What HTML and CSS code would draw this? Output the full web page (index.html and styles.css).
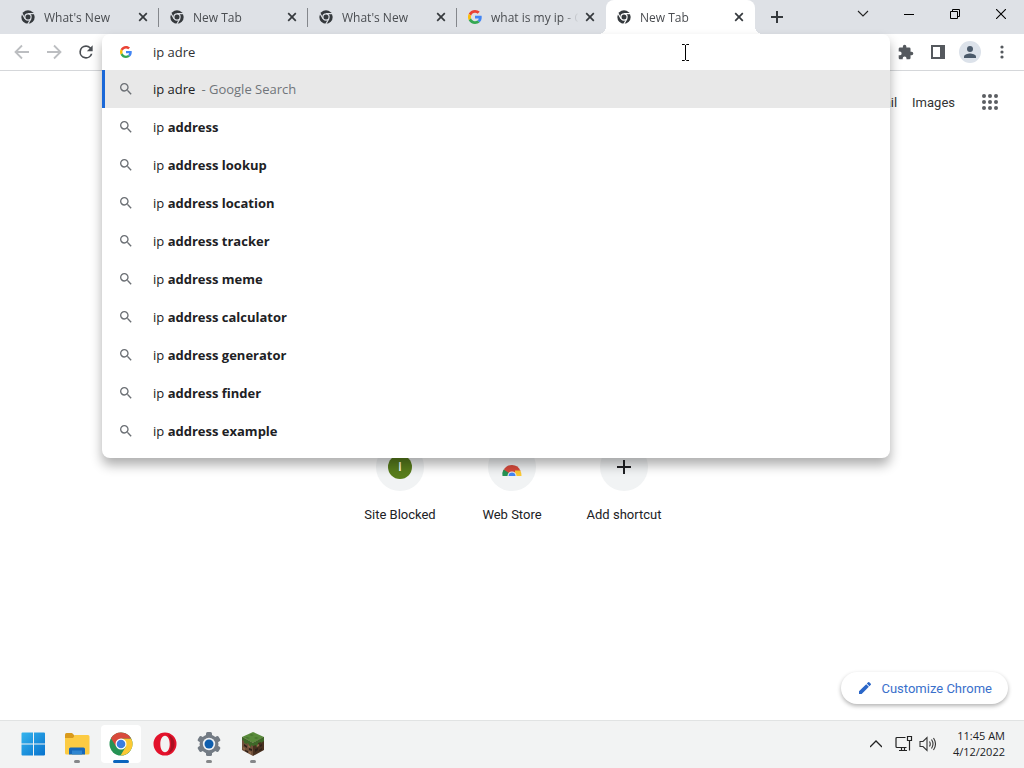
FILE: index.html
```html
<!DOCTYPE html>
<html lang="en">
<head>
<meta charset="utf-8">
<title>New Tab</title>
<link rel="stylesheet" href="styles.css">
</head>
<body>
<svg class="defs" aria-hidden="true">
  <symbol id="chrome-mono" viewBox="0 0 24 24">
    <circle cx="12" cy="12" r="11.5" fill="#35393d"/>
    <circle cx="12" cy="12" r="6.3" fill="var(--gap)"/>
    <path d="M12 6.3h11.5M7 15 1.3 5.2M17 15l-5.6 9.7" stroke="var(--gap)" stroke-width="2" fill="none"/>
    <circle cx="12" cy="12" r="4.300" fill="#35393d"/>
  </symbol>
  <symbol id="google" viewBox="0 0 48 48">
    <path fill="#ea4335" d="M24 9.5c3.5 0 6.700 1.200 9.200 3.600l6.900-6.900C35.900 2.400 30.500 0 24 0 14.600 0 6.500 5.400 2.600 13.200l8 6.200C12.400 13.700 17.700 9.500 24 9.500z"/>
    <path fill="#4285f4" d="M47 24.600c0-1.600-.2-3.100-.4-4.600H24v9h12.900c-.6 3-2.200 5.500-4.700 7.200l7.700 6C44.400 38 47 31.800 47 24.600z"/>
    <path fill="#fbbc05" d="M10.500 28.600c-.5-1.500-.8-3-.8-4.600s.3-3.100.8-4.600l-8-6.200C1 16.500 0 20.100 0 24s.9 7.500 2.600 10.800z"/>
    <path fill="#34a853" d="M24 48c6.500 0 11.900-2.100 15.900-5.800l-7.700-6C30 37.600 27.200 38.500 24 38.500c-6.300 0-11.600-4.200-13.500-9.900l-8 6.200C6.500 42.600 14.600 48 24 48z"/>
  </symbol>
  <symbol id="close" viewBox="0 0 10 10"><path d="M1.200 1.200 8.800 8.800M8.800 1.200 1.200 8.800" stroke="#35393d" stroke-width="1.700"/></symbol>
  <symbol id="search" viewBox="0 0 24 24"><path fill="#6b6f74" d="M15.500 14h-.79l-.28-.27A6.470 6.470 0 0 0 16 9.500 6.500 6.500 0 1 0 9.500 16c1.610 0 3.090-.59 4.230-1.570l.27.28v.79l5 4.990L20.490 19l-4.990-5zm-6 0C7.010 14 5 11.990 5 9.500S7.010 5 9.500 5 14 7.010 14 9.500 11.990 14 9.500 14z"/></symbol>
</svg>

<header class="tabstrip">
  <div class="tab"><svg class="favicon"><use href="#chrome-mono"/></svg><span class="tab-title">What's New</span><button class="tab-close" aria-label="Close What's New"><svg><use href="#close"/></svg></button></div>
  <div class="tab"><svg class="favicon"><use href="#chrome-mono"/></svg><span class="tab-title">New Tab</span><button class="tab-close" aria-label="Close New Tab"><svg><use href="#close"/></svg></button></div>
  <div class="tab"><svg class="favicon"><use href="#chrome-mono"/></svg><span class="tab-title">What's New</span><button class="tab-close" aria-label="Close What's New"><svg><use href="#close"/></svg></button></div>
  <div class="tab tab-last"><svg class="favicon"><use href="#google"/></svg><span class="tab-title">what is my ip - G</span><button class="tab-close" aria-label="Close what is my ip"><svg><use href="#close"/></svg></button></div>
  <div class="tab tab-active"><svg class="favicon"><use href="#chrome-mono"/></svg><span class="tab-title">New Tab</span><button class="tab-close" aria-label="Close New Tab"><svg><use href="#close"/></svg></button></div>
  <button class="new-tab" aria-label="New tab"><svg width="12" height="12" viewBox="0 0 12 12"><path d="M6 0v12M0 6h12" stroke="#35393d" stroke-width="2"/></svg></button>
  <div class="window-controls">
    <button aria-label="Search tabs"><svg width="12" height="12" viewBox="0 0 12 12"><path d="m1 3 5 5 5-5" fill="none" stroke="#222" stroke-width="1.100"/></svg></button>
    <button aria-label="Minimize"><svg width="10" height="10" viewBox="0 0 10 10"><path d="M0 5.500h10" stroke="#000"/></svg></button>
    <button aria-label="Restore"><svg width="10" height="10" viewBox="0 0 10 10"><path d="M.5 2.500h7v7h-7zM2.500 2.500v-2h7v7h-2" fill="none" stroke="#000"/></svg></button>
    <button aria-label="Close window"><svg width="10" height="10" viewBox="0 0 10 10"><path d="m0 0 10 10M10 0 0 10" stroke="#000" stroke-width="1.100"/></svg></button>
  </div>
</header>

<div class="toolbar">
  <div class="tools">
    <button aria-label="Back"><svg width="16" height="16" viewBox="0 0 16 16"><path d="M15 8H2M8 1.500 1.500 8 8 14.500" fill="none" stroke="#bcbec1" stroke-width="1.800"/></svg></button>
    <button aria-label="Forward"><svg width="16" height="16" viewBox="0 0 16 16"><path d="M1 8h13M8 1.500 14.500 8 8 14.500" fill="none" stroke="#bcbec1" stroke-width="1.800"/></svg></button>
    <button aria-label="Reload"><svg width="20" height="20" viewBox="0 0 24 24"><path fill="#4b4f54" d="M17.650 6.350A7.960 7.960 0 0 0 12 4a8 8 0 1 0 7.730 10h-2.080A6 6 0 1 1 12 6c1.660 0 3.140.69 4.220 1.780L13 11h7V4z"/></svg></button>
  </div>
  <div class="omnibox">
    <div class="popup">
      <div class="address">
        <svg class="google-icon"><use href="#google"/></svg>
        <input type="text" value="ip adre" aria-label="Search Google or type a URL" spellcheck="false">
        <svg class="cursor" width="9" height="17" viewBox="0 0 9 17"><path d="M1 .5h2.500l1 1 1-1H8M4.500 1v15M1 16.500h2.500l1-1 1 1H8" fill="none" stroke="#000"/></svg>
      </div>
      <div class="suggestions">
        <button class="selected"><svg><use href="#search"/></svg><span>ip adre<i>- Google Search</i></span></button>
        <button><svg><use href="#search"/></svg><span>ip <b>address</b></span></button>
        <button><svg><use href="#search"/></svg><span>ip <b>address lookup</b></span></button>
        <button><svg><use href="#search"/></svg><span>ip <b>address location</b></span></button>
        <button><svg><use href="#search"/></svg><span>ip <b>address tracker</b></span></button>
        <button><svg><use href="#search"/></svg><span>ip <b>address meme</b></span></button>
        <button><svg><use href="#search"/></svg><span>ip <b>address calculator</b></span></button>
        <button><svg><use href="#search"/></svg><span>ip <b>address generator</b></span></button>
        <button><svg><use href="#search"/></svg><span>ip <b>address finder</b></span></button>
        <button><svg><use href="#search"/></svg><span>ip <b>address example</b></span></button>
      </div>
    </div>
  </div>
  <div class="tools">
    <button aria-label="Extensions"><svg width="16" height="16" viewBox="1 0 23 23"><path fill="#55595e" d="M20.500 11H19V7a2 2 0 0 0-2-2h-4V3.500a2.500 2.500 0 0 0-5 0V5H4a2 2 0 0 0-2 2v3.800h1.500a2.700 2.700 0 0 1 0 5.400H2V20c0 1.100.9 2 2 2h3.800v-1.500a2.700 2.700 0 0 1 5.400 0V22H17a2 2 0 0 0 2-2v-4h1.500a2.500 2.500 0 0 0 0-5z"/></svg></button>
    <button aria-label="Side panel"><svg width="14" height="14" viewBox="0 0 14 14"><path d="M1 1h12v12H1z" fill="none" stroke="#55595e" stroke-width="2"/><path fill="#55595e" d="M9 1h5v12H9z"/></svg></button>
    <button aria-label="Profile"><svg width="22" height="22" viewBox="0 0 22 22"><circle cx="11" cy="11" r="11" fill="#dce2ea"/><circle cx="11" cy="8" r="3" fill="#4b5a6b"/><path fill="#4b5a6b" d="M5 17v-1.500c0-2 4-3 6-3s6 1 6 3V17z"/></svg></button>
    <button aria-label="Menu"><svg width="4" height="14" viewBox="0 0 4 14"><g fill="#55595e"><circle cx="2" cy="2" r="1.600"/><circle cx="2" cy="7" r="1.600"/><circle cx="2" cy="12" r="1.600"/></g></svg></button>
  </div>
</div>

<main class="page">
  <nav class="links">
    <a href="#">Gmail</a>
    <a href="#">Images</a>
    <button aria-label="Google apps"><svg width="16" height="16" viewBox="0 0 16 16"><g fill="#5b5e62"><circle cx="2" cy="2" r="2"/><circle cx="8" cy="2" r="2"/><circle cx="14" cy="2" r="2"/><circle cx="2" cy="8" r="2"/><circle cx="8" cy="8" r="2"/><circle cx="14" cy="8" r="2"/><circle cx="2" cy="14" r="2"/><circle cx="8" cy="14" r="2"/><circle cx="14" cy="14" r="2"/></g></svg></button>
  </nav>
  <div class="shortcuts">
    <a href="#"><span class="bubble"><span class="letter">I</span></span>Site Blocked</a>
    <a href="#"><span class="bubble"><svg width="24" height="24" viewBox="0 -3 24 24"><path fill="#d84a3c" d="M3.500 13a9 9 0 0 1 17 0l-4.500 3H8z"/><path fill="#269354" d="M3.500 11.500A10 10 0 0 0 2.500 18H8l1-3z"/><path fill="#fcc934" d="M15 12.500h5.300a10 10 0 0 1 1.200 5.500H15z"/><path fill="#f3f5f5" d="M7.500 18a4.500 4.500 0 0 1 9 0z"/><path fill="#4285f4" d="M8.500 18a3.500 3.500 0 0 1 7 0z"/></svg></span>Web Store</a>
    <a href="#"><span class="bubble"><svg width="14" height="14" viewBox="0 0 14 14"><path d="M7 0v14M0 7h14" stroke="#202124" stroke-width="2"/></svg></span>Add shortcut</a>
  </div>
  <button class="customize"><svg width="16" height="16" viewBox="0 0 24 24"><path fill="#2a66c8" d="M3 17v4h4L17.800 10.200l-4-4zM20.700 7.300a1.200 1.200 0 0 0 0-1.700l-2.300-2.300a1.200 1.200 0 0 0-1.700 0l-2 2 4 4z"/></svg>Customize Chrome</button>
</main>

<footer class="taskbar">
  <div class="apps">
    <button aria-label="Start"><svg width="24" height="24" viewBox="0 0 24 24"><defs><linearGradient id="win" x2="1" y2="1"><stop stop-color="#35b5ee"/><stop offset="1" stop-color="#0872cd"/></linearGradient></defs><path fill="url(#win)" d="M1.500.5h10.500v11H.5v-10a1 1 0 0 1 1-1zM13 .5h10a1 1 0 0 1 1 1v10H13zM.5 12.500H12v11H1.500a1 1 0 0 1-1-1zM13 12.500h11v10a1 1 0 0 1-1 1H13z"/></svg></button>
    <button class="running" aria-label="File Explorer"><svg width="26" height="24" viewBox="0 0 26 24"><path fill="#d99a1c" d="M1 2.500q0-1.500 1.500-1.500H8l3 3v4H1z"/><path fill="#fccb43" d="M1 6h8l2-3h13q1.500 0 1.500 1.500V21q0 1.500-1.500 1.500H2.500Q1 22.500 1 21z"/><path fill="#1768b9" d="M6.500 15.500h13q1.500 0 1.500 1.500v5.500H5V17q0-1.500 1.500-1.500z"/><path fill="#2f86d0" d="M8 18.500h10v4H8z"/></svg></button>
    <button class="running current" aria-label="Google Chrome"><svg width="24" height="24" viewBox="0 0 24 24"><circle cx="12" cy="12" r="11.500" fill="#269354"/><path fill="#fcc934" d="M12 6.500h10.100A11.500 11.500 0 0 1 11.500 23.500L16.800 14.800z"/><path fill="#d84a3c" d="M2 6.300a11.500 11.500 0 0 1 20 .2H12l-4.800 8.300z"/><circle cx="12" cy="12" r="5.500" fill="#fff"/><circle cx="12" cy="12" r="4.300" fill="#3b7de0"/></svg></button>
    <button aria-label="Opera"><svg width="24" height="24" viewBox="0 0 24 24"><path fill="#e3122b" fill-rule="evenodd" d="M12 .5a11.500 11.500 0 1 0 0 23 11.500 11.500 0 0 0 0-23zm0 3.300c3 0 4.700 3.700 4.700 8.200S15 20.200 12 20.200 7.300 16.500 7.300 12 9 3.800 12 3.800z"/><path fill="#ab1020" d="M15 2.500c4 1.500 6.500 5 6.500 9.500s-2.500 8-6.500 9.500c2-2.300 3-5.500 3-9.500s-1-7.200-3-9.500z"/></svg></button>
    <button class="running" aria-label="Settings"><svg width="24" height="24" viewBox="0 0 24 24"><g fill="#737b84"><circle cx="12" cy="12" r="9.500"/><rect x="9" width="6" height="24" rx="1.500"/><rect x="9" width="6" height="24" rx="1.500" transform="rotate(60 12 12)"/><rect x="9" width="6" height="24" rx="1.500" transform="rotate(120 12 12)"/></g><circle cx="12" cy="12" r="6.200" fill="#eef1f4"/><circle cx="12" cy="12" r="4.500" fill="#0e5eae"/></svg></button>
    <button class="running" aria-label="Minecraft"><svg width="24" height="26" viewBox="0 0 24 26"><path fill="#598b3b" d="m12 1 11 5-11 6L1 6z"/><path fill="#70503a" d="m1 6 11 6v13L1 19z"/><path fill="#48301f" d="m23 6-11 6v13l11-6z"/><path fill="#3e6828" d="m1 6 11 6v3l-2-1v2l-2-1v-2l-2-1v1l-3-1V10l-2-1zM23 6l-11 6v3l3-1v2l2-1v-3l3-1v1l3-2z"/><path fill="#2e2018" d="m3 13 3 2v2l-3-2zm5 4 3 1v2l-3-1zm-4 2 3 1v2l-3-2zm10-1 3-1v2l-3 2zm5-4 2-1v2l-2 1zm-1 5 3-2v2l-3 1z"/><path fill="#91674a" d="m2 16 2 1v2l-2-1zm5-2 2 1v2l-2-1zm1 6 2 1v2l-2-1zm8-6 2-1v2l-2 1z"/><path fill="#4a7730" d="m10 3 3 1-2 1-3-1zm5 3 3 1-3 1-2-1zM6 6l3 1-2 1-3-2z"/></svg></button>
  </div>
  <div class="tray">
    <button aria-label="Show hidden icons"><svg width="12" height="12" viewBox="0 0 12 12"><path d="m0 9 6-6 6 6" fill="none" stroke="#222" stroke-width="1.300"/></svg></button>
    <button aria-label="Network"><svg width="18" height="18" viewBox="0 0 18 18"><path d="M10.500 2.500H2q-1 0-1 1v8q0 1 1 1h9.500M4 15.500h8M6.500 12.500v3M9.500 12.500v3M12.500 1.500h4v4h-4zM14.500 5.500v10" fill="none" stroke="#222" stroke-width="1.200"/></svg></button>
    <button aria-label="Volume"><svg width="18" height="18" viewBox="0 0 18 18"><path d="M1 6.500h3l4-4v13l-4-4H1zM10.500 6.500q1.500 2.500 0 5M12.500 4.500q3 4.500 0 9M14.500 3q4 6 0 12" fill="none" stroke="#333" stroke-width="1.100"/></svg></button>
    <time class="clock" datetime="2022-04-12T11:45"><span>11:45 AM</span><span>4/12/2022</span></time>
  </div>
</footer>
</body>
</html>
```
FILE: styles.css
```css
* { box-sizing: border-box; }

body {
  margin: 0;
  min-height: 100vh;
  display: flex;
  flex-direction: column;
  background: #fff;
  color: #202124;
  font-family: "Open Sans", "Noto Sans", sans-serif;
  font-size: 13px;
}

button {
  display: flex;
  align-items: center;
  justify-content: center;
  padding: 0;
  border: 0;
  background: none;
  color: inherit;
  font: inherit;
}

a { color: inherit; text-decoration: none; }
svg { flex: none; }
.defs { display: none; }

.tabstrip {
  --gap: #dee1e6;
  display: flex;
  height: 34px;
  padding-left: 10px;
  background: #dee1e6;
}

.tab {
  position: relative;
  display: flex;
  align-items: center;
  flex: 0 1 149px;
  min-width: 0;
  padding: 0 10px 0 11px;
  color: #4a4d51;
  font-size: 12px;
}

.tab:not(.tab-last, .tab-active)::after {
  content: "";
  position: absolute;
  right: 0;
  top: 8px;
  height: 19px;
  border-right: 1px solid #84878c;
}

.tab-active {
  --gap: #fff;
  background: #fff;
  border-radius: 8px 8px 0 0;
}

.tab-active::before,
.tab-active::after {
  content: "";
  position: absolute;
  bottom: 0;
  width: 8px;
  height: 8px;
}

.tab-active::before {
  right: 100%;
  background: radial-gradient(circle at 0 0, #dee1e6 8px, #fff 8px);
}

.tab-active::after {
  left: 100%;
  background: radial-gradient(circle at 100% 0, #dee1e6 8px, #fff 8px);
}

.favicon { width: 14px; height: 14px; }

.tab-title {
  flex: 1;
  min-width: 0;
  margin-left: 9px;
  overflow: hidden;
  white-space: nowrap;
  mask-image: linear-gradient(to right, #000 76%, transparent 94%);
}

.tab-close { width: 12px; height: 16px; }
.tab-close svg { width: 10px; height: 10px; }
.new-tab { width: 44px; }
.window-controls { display: flex; margin-left: auto; }
.window-controls button { width: 46px; height: 28px; }

.toolbar {
  display: flex;
  height: 37px;
  border-bottom: 1px solid #d5d7da;
}

.tools { display: flex; padding: 0 0 0 6px; }
.omnibox + .tools { padding: 0 6px 0 0; }
.tools button { width: 32px; }

.omnibox { position: relative; flex: 1; }

.popup {
  position: absolute;
  z-index: 2;
  top: 0;
  left: 0;
  right: 0;
  padding-bottom: 8px;
  border-radius: 8px;
  background: #fff;
  box-shadow: 0 7px 12px rgba(0, 0, 0, 0.32);
}

.address {
  position: relative;
  display: flex;
  align-items: center;
  height: 36px;
  padding-left: 18px;
}

.google-icon { width: 12px; height: 12px; }

.address input {
  flex: 1;
  min-width: 0;
  margin-left: 21px;
  padding: 0;
  border: 0;
  outline: 0;
  background: none;
  color: #303134;
  font: inherit;
}

.cursor { position: absolute; right: 200px; top: 10px; }

.suggestions button {
  width: 100%;
  height: 38px;
  justify-content: flex-start;
  gap: 19px;
  padding-left: 16px;
}

.suggestions .selected {
  padding-left: 13px;
  border-left: 3px solid #1a68d8;
  background: #e8e8e8;
}

.suggestions svg { width: 16px; height: 16px; }
.suggestions i { margin-left: 6px; color: #70757a; font-style: normal; }

.page {
  flex: 1;
  display: flex;
  flex-direction: column;
  font-family: Roboto, sans-serif;
}

.links {
  display: flex;
  align-items: center;
  justify-content: flex-end;
  gap: 15px;
  height: 62px;
  padding-right: 18px;
  color: #333;
}

.links button { width: 32px; height: 32px; margin-left: 4px; }

.shortcuts {
  display: flex;
  justify-content: center;
  margin-top: 310px;
}

.shortcuts a {
  display: flex;
  flex-direction: column;
  align-items: center;
  gap: 16px;
  width: 112px;
  line-height: 16px;
}

.bubble {
  display: flex;
  align-items: center;
  justify-content: center;
  width: 48px;
  height: 48px;
  border-radius: 50%;
  background: #f1f3f4;
}

.letter {
  width: 24px;
  border-radius: 50%;
  background: #587d1c;
  color: #fff;
  font-size: 12px;
  font-weight: 500;
  line-height: 24px;
  text-align: center;
}

.customize {
  align-self: flex-end;
  gap: 8px;
  height: 32px;
  margin: auto 16px 16px;
  padding: 0 16px;
  border-radius: 16px;
  background: #fff;
  box-shadow: 0 2px 4px rgba(0, 0, 0, 0.3);
  color: #3a70cb;
}

.taskbar {
  display: flex;
  justify-content: space-between;
  height: 48px;
  padding: 0 19px 0 13px;
  background: #f2f3f3;
  box-shadow: inset 0 1px #e1e3e3;
}

.apps { display: flex; align-items: center; gap: 4px; }

.apps button {
  position: relative;
  width: 40px;
  height: 38px;
  border-radius: 4px;
}

.apps .current { background: #fff; }

.running::after {
  content: "";
  position: absolute;
  bottom: 0;
  width: 6px;
  height: 3px;
  border-radius: 2px;
  background: #858789;
}

.current::after { width: 16px; background: #0a65bd; }

.tray { display: flex; align-items: center; gap: 6px; }
.tray button { width: 18px; height: 32px; }
.tray button:first-child { margin-right: 4px; }

.clock {
  display: flex;
  flex-direction: column;
  align-items: flex-end;
  margin-left: 10px;
  font-size: 11px;
  line-height: 16px;
}
```
